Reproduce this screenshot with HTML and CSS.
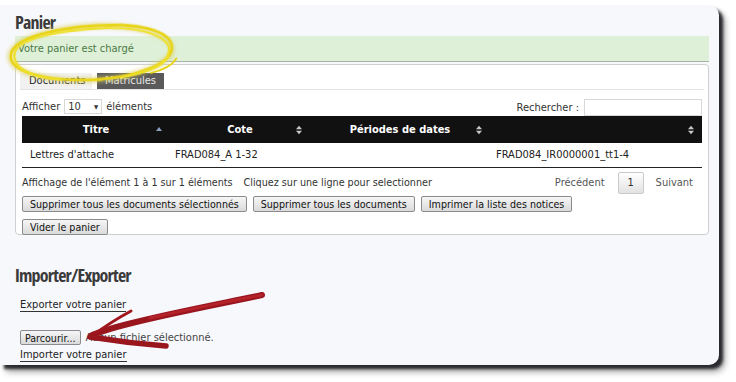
FILE: index.html
```html
<!DOCTYPE html>
<html lang="fr">
<head>
<meta charset="utf-8">
<title>Panier</title>
<link rel="stylesheet" href="styles.css">
</head>
<body>
<div class="sheet">
  <h1 class="title">Panier</h1>
  <div class="alert">Votre panier est chargé</div>
  <div class="tabbox">
    <ul class="tabnav">
      <li class="tab">Documents</li>
      <li class="tab tab-dark">Matricules</li>
    </ul>
    <div class="panel">
      <div class="controls">
        <label class="length">Afficher <span class="select">10 <span class="caret">▼</span></span> éléments</label>
        <label class="search">Rechercher : <span class="input"></span></label>
      </div>
      <table class="grid">
        <thead>
          <tr>
            <th class="c1">Titre<svg class="sort" width="8" height="10" viewBox="0 0 8 10"><path d="M1 6 L4 2 L7 6 Z" fill="#8e9dc4"/></svg></th>
            <th class="c2">Cote<svg class="sort" width="8" height="10" viewBox="0 0 8 10"><path d="M1 4.3 L4 0.8 L7 4.3 Z M1 5.7 L4 9.2 L7 5.7 Z" fill="#c8c8c8"/></svg></th>
            <th class="c3">Périodes de dates<svg class="sort" width="8" height="10" viewBox="0 0 8 10"><path d="M1 4.3 L4 0.8 L7 4.3 Z M1 5.7 L4 9.2 L7 5.7 Z" fill="#c8c8c8"/></svg></th>
            <th class="c4"><svg class="sort" width="8" height="10" viewBox="0 0 8 10"><path d="M1 4.3 L4 0.8 L7 4.3 Z M1 5.7 L4 9.2 L7 5.7 Z" fill="#c8c8c8"/></svg></th>
          </tr>
        </thead>
        <tbody>
          <tr>
            <td class="d1">Lettres d'attache</td>
            <td class="d2">FRAD084_A 1-32</td>
            <td></td>
            <td class="d4">FRAD084_IR0000001_tt1-4</td>
          </tr>
        </tbody>
      </table>
      <div class="footer">
        <span class="info">Affichage de l'élément 1 à 1 sur 1 éléments<span class="hint">Cliquez sur une ligne pour selectionner</span></span>
        <span class="pager"><span class="pg">Précédent</span><span class="pnum">1</span><span class="pg">Suivant</span></span>
      </div>
      <div class="actions">
        <button class="btn">Supprimer tous les documents sélectionnés</button>
        <button class="btn">Supprimer tous les documents</button>
        <button class="btn">Imprimer la liste des notices</button>
      </div>
      <div class="actions">
        <button class="btn">Vider le panier</button>
      </div>
    </div>
  </div>
  <h1 class="title title-2">Importer/Exporter</h1>
  <a class="link export">Exporter votre panier</a>
  <div class="file"><button class="btn btn-file">Parcourir...</button><span class="nofile">Aucun fichier sélectionné.</span></div>
  <a class="link import">Importer votre panier</a>
</div>
<svg class="marks" width="736" height="382" viewBox="0 0 736 382">
  <defs>
    <filter id="glow" x="-20%" y="-20%" width="140%" height="140%"><feGaussianBlur stdDeviation="1.8"/></filter>
    <filter id="soft" x="-20%" y="-20%" width="140%" height="140%"><feGaussianBlur stdDeviation="0.5"/></filter>
  </defs>
  <g transform="rotate(-3 91 53)">
    <ellipse cx="91" cy="53" rx="81" ry="27" fill="none" stroke="#d9cf5a" stroke-opacity="0.45" stroke-width="7" filter="url(#glow)"/>
    <path d="M100 80 C 40 80, 7 66, 11 50 C 15 33, 60 26, 100 26 C 150 26, 173 38, 172 52 C 171 67, 140 79, 92 80" fill="none" stroke="#e8d417" stroke-width="2.8" stroke-linecap="round" filter="url(#soft)"/>
    <path d="M60 78 C 24 74, 11 61, 15 48 C 21 33, 70 28, 110 29 C 153 31, 171 44, 169 55 C 167 69, 150 75, 120 79" fill="none" stroke="#efe02a" stroke-width="2.2" stroke-linecap="round" filter="url(#soft)"/>
    <path d="M150 76 C 162 74, 171 70, 176 63" fill="none" stroke="#e8d417" stroke-width="2" stroke-linecap="round"/>
  </g>
  <g filter="url(#soft)">
    <path d="M262 295 C 230 302, 175 312, 128 324 C 112 328, 100 332, 92 335" fill="none" stroke="#98141e" stroke-width="6" stroke-linecap="round"/>
    <path d="M262 295 C 235 300, 195 308, 150 318" fill="none" stroke="#b4232c" stroke-width="3" stroke-linecap="round"/>
    <path d="M92 336 C 104 327, 118 318, 131 311" fill="none" stroke="#a0161f" stroke-width="3" stroke-linecap="round"/>
    <path d="M90 337 C 115 341, 140 344, 166 346" fill="none" stroke="#98141e" stroke-width="5.5" stroke-linecap="round"/>
  </g>
</svg>
</body>
</html>
```
FILE: styles.css
```css
* { box-sizing: border-box; }
html, body { margin: 0; padding: 0; background: #ffffff; }
body {
  width: 736px;
  height: 382px;
  overflow: hidden;
  position: relative;
  font-family: "DejaVu Sans Condensed", "DejaVu Sans", sans-serif;
  font-size: 11px;
  color: #333;
}
.sheet {
  margin-top: 5px;
  width: 719px;
  height: 360px;
  background: #f7f8fc;
  border-radius: 0 10px 10px 0;
  box-shadow: 4px 4px 3px rgba(20,20,25,0.85), 6px 7px 6px rgba(0,0,0,0.35);
  padding: 6px 10px 0 15px;
  display: flex;
  flex-direction: column;
  align-items: flex-start;
}
.title {
  margin: 0;
  font-family: "Open Sans", "DejaVu Sans Condensed", sans-serif;
  font-stretch: 75%;
  font-weight: 700;
  font-size: 18px;
  line-height: 22px;
  color: #3a3a3a;
  letter-spacing: -0.8px;
}
.alert {
  margin-top: 3px;
  width: 694px;
  height: 26px;
  background: #dff0d8;
  border-bottom: 1px solid #a9b4a6;
  color: #4a7a45;
  padding-left: 3px;
  line-height: 25px;
}
.tabbox {
  margin-top: 2px;
  width: 694px;
  height: 171px;
  background: #fff;
  border: 1px solid #cfcfcf;
  border-radius: 4px;
  padding: 8px 0 0 0;
}
.tabnav {
  list-style: none;
  margin: 0 4px;
  padding: 0;
  display: flex;
  gap: 5px;
  border-bottom: 1px solid #e4e4e4;
}
.tab {
  height: 16px;
  line-height: 16px;
  padding: 0 9px;
  background: #f1f1f1;
  color: #222;
}
.tab-dark { background: #5a5a5a; color: #e8e8e8; padding: 0 8px; width: 67px; }
.tab:first-child { width: 72px; }
.panel { padding: 0 6px; }
.controls {
  display: flex;
  justify-content: space-between;
  align-items: flex-end;
  margin-top: 9px;
  height: 17px;
  color: #333;
}
.length { display: flex; align-items: center; gap: 4px; margin-bottom: 2px; }
.select {
  display: inline-flex;
  justify-content: space-between;
  align-items: center;
  width: 38px;
  height: 15px;
  border: 1px solid #d8d8d8;
  background: #fff;
  padding: 0 3px;
  font-size: 11px;
}
.caret { font-size: 6px; color: #333; }
.search { display: flex; align-items: center; gap: 5px; }
.input { width: 118px; height: 17px; border: 1px solid #d8d8d8; background: #fff; }
.grid { width: 680px; border-collapse: collapse; table-layout: fixed; }
.grid th {
  background: #111;
  color: #fff;
  font-weight: bold;
  height: 27px;
  padding: 0;
  position: relative;
  text-align: center;
}
.grid .sort { position: absolute; right: 7px; top: 9px; }
.c1 { width: 148px; }
.c2 { width: 140px; }
.c3 { width: 180px; }
.c4 { width: 212px; }
.grid td { height: 24px; padding: 0; border-bottom: 1px solid #222; color: #222; }
.d1 { padding-left: 8px !important; }
.d2 { padding-left: 5px !important; }
.d4 { padding-left: 6px !important; }
.footer {
  display: flex;
  justify-content: space-between;
  align-items: center;
  margin-top: 4px;
  height: 22px;
}
.info { font-size: 10.7px; }
.hint { margin-left: 11px; }
.pager { display: flex; align-items: center; margin-right: 9px; }
.pg { color: #555; }
.pnum {
  width: 26px;
  height: 22px;
  margin: 0 12px 0 13px;
  border: 1px solid #cacaca;
  border-radius: 2px;
  background: linear-gradient(#ffffff, #e2e2e2);
  display: flex;
  align-items: center;
  justify-content: center;
  color: #333;
}
.actions { display: flex; gap: 6px; margin-top: 2px; }
.actions + .actions { margin-top: 7px; }
.btn {
  font-family: "DejaVu Sans Condensed", "DejaVu Sans", sans-serif;
  font-size: 10.6px;
  height: 16px;
  line-height: 14px;
  padding: 0 7px;
  border: 1px solid #8b8b8b;
  border-radius: 2px;
  background: linear-gradient(#f6f6f6, #dadada);
  color: #111;
}
.title-2 { margin-top: 29px; }
.link {
  color: #222;
  border-bottom: 1px solid #333;
  line-height: 13px;
  margin-left: 5px;
}
.export { margin-top: 12px; }
.import { margin-top: 3px; }
.file { display: flex; align-items: center; margin-top: 18px; margin-left: 5px; gap: 5px; }
.btn-file { padding: 0 4px; height: 15px; }
.nofile { color: #444; }
.marks { position: absolute; left: 0; top: 0; pointer-events: none; }
```
